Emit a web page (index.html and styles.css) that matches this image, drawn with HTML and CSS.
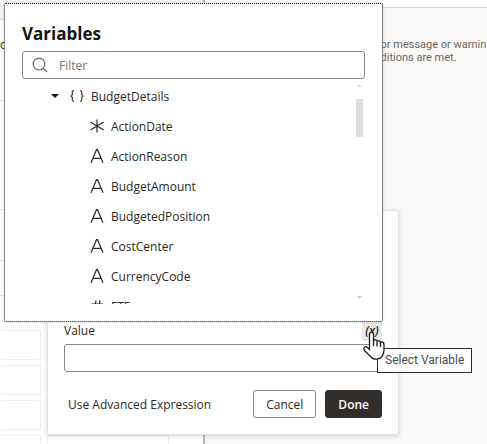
FILE: index.html
```html
<!DOCTYPE html>
<html lang="en">
<head>
    <meta charset="UTF-8">
    <meta name="viewport" content="width=device-width, initial-scale=1.0">
    <title>Variables</title>
    <link rel="stylesheet" href="styles.css">
</head>
<body>
    <div class="workspace">
        <div class="canvas">
            <div class="canvas-head"></div>
            <div class="canvas-block block-name">o</div>
            <div class="canvas-block block-tall"></div>
            <div class="canvas-block block-mid"></div>
            <div class="canvas-block block-small"></div>
            <div class="cells">
                <div class="cell"></div><div></div>
                <div class="cell"></div><div></div>
                <div class="cell"></div><div></div>
                <div class="cell"></div><div class="cell"></div>
            </div>
        </div>
        <div class="side">
            <p class="side-text">or message or warnin<br>ditions are met.</p>
        </div>
    </div>

    <div class="dialog">
        <div class="value-head">
            <label for="value">Value</label>
            <button class="fx" aria-label="Select Variable">(x)</button>
        </div>
        <input class="field" id="value" type="text">
        <div class="dialog-foot">
            <button class="link-btn">Use Advanced Expression</button>
            <button class="btn">Cancel</button>
            <button class="btn btn-primary">Done</button>
        </div>
    </div>

    <div class="popup">
        <h2>Variables</h2>
        <div class="filter">
            <svg width="16" height="16" viewBox="0 0 16 16" fill="none" stroke="#6b6763" stroke-width="1.2">
                <circle cx="7" cy="7" r="5.8"/>
                <path d="M11 11l4 4"/>
            </svg>
            <input class="field" type="text" placeholder="Filter" aria-label="Filter">
        </div>
        <div class="tree-wrap">
            <ul class="tree">
                <li class="node">
                    <svg class="caret" width="8" height="4" viewBox="0 0 8 4"><path d="M0 0h8L4 4z" fill="#161513"/></svg>
                    <svg width="14" height="14" viewBox="0 0 14 14" fill="none" stroke="#403c38" stroke-width="1.2">
                        <path d="M4 1.5C2.5 1.5 2.3 2.2 2.3 3.3v1.6C2.3 6.2 1.7 7 .5 7c1.2 0 1.8.8 1.8 2.1v1.6c0 1.1.2 1.8 1.7 1.8"/>
                        <path d="M10 1.5c1.5 0 1.7.7 1.7 1.8v1.6c0 1.3.6 2.1 1.8 2.1-1.2 0-1.8.8-1.8 2.1v1.6c0 1.1-.2 1.8-1.7 1.8"/>
                    </svg>
                    <span>BudgetDetails</span>
                </li>
                <li class="leaf">
                    <svg width="14" height="14" viewBox="0 0 14 14" fill="none" stroke="#2b2825" stroke-width="1.2"><path d="M7 .5v13M.4 3l13.2 8M.4 11l13.2-8"/></svg>
                    <span>ActionDate</span>
                </li>
                <li class="leaf">
                    <svg width="14" height="14" viewBox="0 0 14 14"><use href="#string"/></svg>
                    <span>ActionReason</span>
                </li>
                <li class="leaf">
                    <svg width="14" height="14" viewBox="0 0 14 14"><use href="#string"/></svg>
                    <span>BudgetAmount</span>
                </li>
                <li class="leaf">
                    <svg width="14" height="14" viewBox="0 0 14 14"><use href="#string"/></svg>
                    <span>BudgetedPosition</span>
                </li>
                <li class="leaf">
                    <svg width="14" height="14" viewBox="0 0 14 14"><use href="#string"/></svg>
                    <span>CostCenter</span>
                </li>
                <li class="leaf">
                    <svg width="14" height="14" viewBox="0 0 14 14"><use href="#string"/></svg>
                    <span>CurrencyCode</span>
                </li>
                <li class="leaf">
                    <svg width="14" height="14" viewBox="0 0 14 14" fill="none" stroke="#2b2825" stroke-width="1.2"><path d="M6 1.5l-2 11.5M10 1.5l-2 11.5M1.5 5h11.5M1 9.5h11.5"/></svg>
                    <span>FTE</span>
                </li>
            </ul>
            <div class="scroll">
                <svg width="5" height="3" viewBox="0 0 5 3"><path d="M0 3h5L2.5 0z" fill="#dcdbda"/></svg>
                <div class="thumb"></div>
                <svg width="5" height="3" viewBox="0 0 5 3"><path d="M0 0h5L2.5 3z" fill="#cfcecd"/></svg>
            </div>
        </div>
    </div>

    <div class="tooltip" role="tooltip">Select Variable</div>

    <svg class="cursor" width="22" height="30" viewBox="0 0 22 30">
        <path d="M6.5 3.5C6.5.3 10.5.3 10.5 3.5V9.5C11 8.3 14 8.5 14 10.5 14.5 9.3 17.5 9.5 17.5 11.5 18.5 10.5 21 11 21 13.5V19c0 4-1 5-2.5 7.2C17 28.3 10.5 29 8.5 26.5L1.5 19.5C-.5 16.5 2.5 14.5 4.5 16.5L6.5 18.5z" fill="#fff" stroke="#1b1a2b" stroke-width="1.3"/>
        <path d="M10.5 9v6M14 10.5v5M17.5 11.5v4.5" fill="none" stroke="#1b1a2b" stroke-width="1.3"/>
    </svg>

    <svg width="0" height="0" class="defs">
        <symbol id="string" viewBox="0 0 14 14">
            <path d="M1 13.7L6.5.7h1L13 13.7M3 9.3h8" fill="none" stroke="#2b2825" stroke-width="1.2"/>
        </symbol>
    </svg>
</body>
</html>
```
FILE: styles.css
```css
* {
    box-sizing: border-box;
}

body {
    margin: 0;
    height: 100vh;
    position: relative;
    overflow: hidden;
    font-family: "Open Sans", "Noto Sans", sans-serif;
    font-size: 12px;
    color: #2b2825;
    background: #fff;
}

button, input {
    font: inherit;
    color: inherit;
}

/* page behind the dialog */
.workspace {
    display: flex;
    height: 100%;
}

.canvas {
    flex: 0 0 42%;
    overflow: hidden;
    border-right: 2px solid #b5b3b1;
}

.canvas-head {
    height: 20px;
    background: #f5f4f2;
    border-bottom: 1px solid #dddbd9;
}

.canvas-block {
    border-bottom: 1px solid #e4e2e0;
}

.block-name {
    height: 81px;
    padding-top: 16px;
}

.block-tall { height: 109px; }
.block-mid { height: 51px; }
.block-small { height: 35px; }

.cells {
    display: grid;
    grid-template-columns: 41px 122px;
    gap: 5px 6px;
    margin-top: 34px;
}

.cells div {
    height: 30px;
}

.cell {
    border: 1px solid #eeedec;
    border-radius: 2px;
}

.cell:nth-child(odd) {
    border-left: 0;
}

.side {
    flex: 1;
    min-width: 0;
    margin-top: 7px;
    padding: 30px 0 0 176px;
    border-top: 1px solid #dddbd9;
    background: #faf9f8;
    overflow: hidden;
}

.side-text {
    margin: 0;
    font-family: Roboto, "Open Sans", sans-serif;
    font-size: 11px;
    line-height: 13px;
    white-space: nowrap;
    color: #6b6560;
}

/* expression dialog */
.dialog {
    position: absolute;
    left: 47px;
    right: 88px;
    top: 210px;
    padding: 108px 16px 16px;
    background: #fff;
    border: 1px solid #e4e2e0;
    border-radius: 2px;
    box-shadow: 0 1px 4px rgba(0, 0, 0, 0.16);
}

.value-head {
    display: flex;
    justify-content: space-between;
    align-items: center;
    height: 22px;
    margin-bottom: 3px;
}

.fx {
    width: 20px;
    height: 22px;
    padding: 0;
    border: 0;
    border-radius: 2px;
    background: #e9e8e7;
    font-style: italic;
    font-weight: 600;
}

.field {
    display: block;
    width: 100%;
    height: 28px;
    border: 1px solid #8b8785;
    border-radius: 3px;
    background: #fff;
}

.dialog-foot {
    display: flex;
    align-items: center;
    gap: 9px;
    margin-top: 18px;
}

.link-btn {
    margin-right: auto;
    padding: 0 0 0 4px;
    border: 0;
    background: none;
}

.btn {
    height: 28px;
    padding: 0 12px;
    border: 1px solid #8b8785;
    border-radius: 3px;
    background: #fff;
}

.btn-primary {
    background: #312d2a;
    border-color: #312d2a;
    color: #fff;
    font-weight: 600;
}

/* variable picker */
.popup {
    position: absolute;
    left: 4px;
    right: 104px;
    top: 3px;
    padding: 17px 17px 17px;
    background: #fff;
    border: 1px dotted #161513;
    border-right: 1px solid #858381;
    border-radius: 2px;
    box-shadow: 0 0 3px rgba(0, 0, 0, 0.2);
}

.popup h2 {
    margin: 0 0 5px;
    font-size: 17px;
    line-height: 25px;
    color: #161513;
}

.filter {
    display: flex;
    align-items: center;
}

.filter svg {
    position: absolute;
    left: 27px;
}

.filter .field {
    padding: 0 8px 0 36px;
}

.filter .field::placeholder {
    color: #77736f;
    opacity: 1;
}

.tree-wrap {
    display: flex;
    height: 223px;
    margin-top: 2px;
}

.tree {
    flex: 1;
    margin: 0;
    padding: 0;
    list-style: none;
    overflow: hidden;
}

.node, .leaf {
    display: flex;
    align-items: center;
    gap: 7px;
    height: 30px;
    padding-left: 68px;
}

.node {
    padding-left: 29px;
}

.caret {
    margin-right: 4px;
}

.scroll {
    display: flex;
    flex-direction: column;
    align-items: center;
    width: 7px;
    margin-right: 2px;
    padding: 3px 0 5px;
}

.thumb {
    width: 7px;
    height: 38px;
    margin: 12px 0 auto;
    background: #e0dfde;
}

.tooltip {
    position: absolute;
    left: 377px;
    top: 348px;
    padding: 0 7px;
    border: 1px solid #2b2b2b;
    background: #fff;
    font-family: Roboto, "Open Sans", sans-serif;
    line-height: 23px;
    white-space: nowrap;
    color: #4a4a55;
}

.cursor {
    position: absolute;
    left: 363px;
    top: 331px;
}

.defs {
    position: absolute;
}
```
